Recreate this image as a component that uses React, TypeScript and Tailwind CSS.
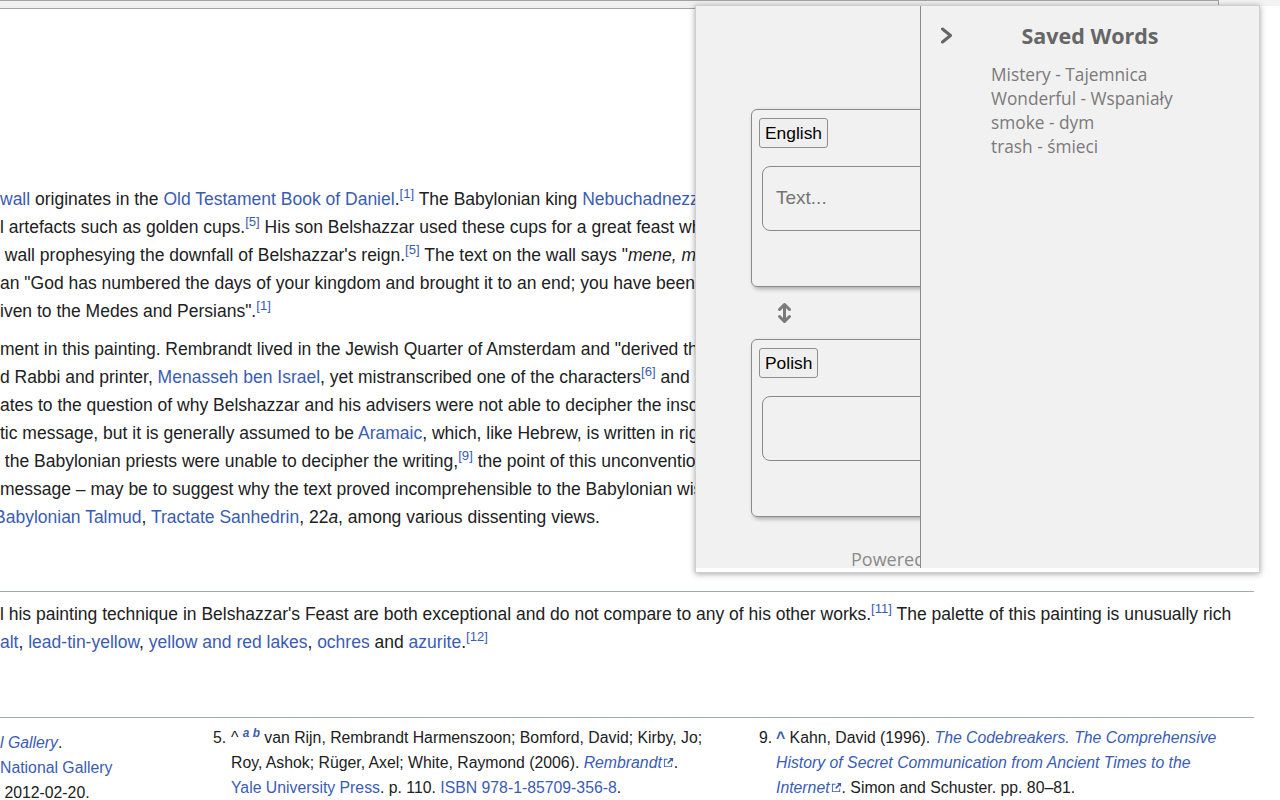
import React from "react";

// Wikipedia article (scrolled, clipped) with a translator popup on top

const A = ({ children, i }: { children: React.ReactNode; i?: boolean }) => (
  <a className={`text-[#3a5cb4] ${i ? "italic" : ""}`}>{children}</a>
);

const Ref = ({ n }: { n: number }) => <sup className="text-[#3a5cb4]">[{n}]</sup>;

const ExtIcon = () => (
  <svg width="11" height="11" viewBox="0 0 12 12" className="inline-block align-baseline ml-[1px]">
    <path fill="#3a5cb4" d="M1 2h4v1H2v7h7V7h1v4H1z" />
    <path fill="#3a5cb4" d="M6.5 1H11v4.5L9.3 3.8 5.6 7.5 4.5 6.4 8.2 2.7z" />
  </svg>
);

const SwapIcon = () => (
  <svg width="17" height="22" viewBox="0 0 17 22" fill="none" stroke="#7a7a7a" strokeWidth="3" strokeLinecap="round" strokeLinejoin="round">
    <path d="M8.5 3v16" />
    <path d="M3.5 7.5l5-5 5 5" />
    <path d="M3.5 14.5l5 5 5-5" />
  </svg>
);

const Chevron = () => (
  <svg width="13" height="17" viewBox="0 0 13 17" fill="none" stroke="#666" strokeWidth="3" strokeLinecap="round" strokeLinejoin="round">
    <path d="M2.5 2l8 6.5-8 6.5" />
  </svg>
);

function LangCard({ lang, placeholder }: { lang: string; placeholder?: string }) {
  return (
    <div className="w-[380px] h-[178px] rounded-[6px] border border-[#8a8a8a] shadow-[2px_2px_4px_rgba(0,0,0,0.3)] pl-[7px] pt-[8px]">
      <button className="h-[30px] px-[5px] rounded-[3px] border border-[#8f8f8f] bg-[#efefef] text-[17.4px] leading-[20px] text-black font-['Liberation_Sans',Arial,sans-serif]">
        {lang}
      </button>
      <div className="ml-[3px] mt-[18px] w-[360px] h-[65px] rounded-[8px] border border-[#8a8a8a] pl-[13px] flex items-center text-[19px] text-[#757575] font-['Liberation_Sans',Arial,sans-serif]">
        {placeholder}
      </div>
    </div>
  );
}

const savedWords = ["Mistery - Tajemnica", "Wonderful - Wspaniały", "smoke - dym", "trash - śmieci"];

export default function App() {
  return (
    <div className="relative w-[1280px] h-[800px] overflow-hidden bg-white text-[#202122] font-['Liberation_Sans',Arial,sans-serif]">
      {/* strip at the very top */}
      <div className="flex">
        <div className="w-[1219px] h-[9px] bg-[#f0f0f0] border-y border-r border-[#a3a3a3] rounded-br-[3px]" />
        <div className="flex-1 h-[6px] bg-[#f3f3f3]" />
      </div>

      <main className="text-[17.5px] leading-[28px] whitespace-nowrap">
        <div className="mt-[176px]">
          <div><A>wall</A> originates in the <A>Old Testament Book of Daniel</A>.<Ref n={1} /> The Babylonian king <A>Nebuchadnezzar</A> had plundered the Temple in Jerusalem</div>
          <div>l artefacts such as golden cups.<Ref n={5} /> His son Belshazzar used these cups for a great feast where a hand appeared</div>
          <div>&nbsp;wall prophesying the downfall of Belshazzar's reign.<Ref n={5} /> The text on the wall says "<i>mene, mene, tekel, upharsin</i>", which</div>
          <div>an "God has numbered the days of your kingdom and brought it to an end; you have been weighed</div>
          <div>iven to the Medes and Persians".<Ref n={1} /></div>
        </div>

        <div className="mt-[10px]">
          <div>ment in this painting. Rembrandt lived in the Jewish Quarter of Amsterdam and "derived the</div>
          <div>d Rabbi and printer, <A>Menasseh ben Israel</A>, yet mistranscribed one of the characters<Ref n={6} /> and</div>
          <div>ates to the question of why Belshazzar and his advisers were not able to decipher the inscription</div>
          <div>tic message, but it is generally assumed to be <A>Aramaic</A>, which, like Hebrew, is written in right</div>
          <div>&nbsp;the Babylonian priests were unable to decipher the writing,<Ref n={9} /> the point of this unconventional</div>
          <div>message – may be to suggest why the text proved incomprehensible to the Babylonian wise men</div>
          <div className="-ml-[6px]"><A>Babylonian Talmud</A>, <A>Tractate Sanhedrin</A>, 22<i>a</i>, among various dissenting views.</div>
        </div>

        <div className="mt-[60px] w-[1254px] border-t border-[#a2a9b1]" />

        <div className="mt-[8px]">
          <div>l his painting technique in Belshazzar's Feast are both exceptional and do not compare to any of his other works.<Ref n={11} /> The palette of this painting is unusually rich</div>
          <div><A>alt</A>, <A>lead-tin-yellow</A>, <A>yellow and red lakes</A>, <A>ochres</A> and <A>azurite</A>.<Ref n={12} /></div>
        </div>

        <div className="mt-[61px] w-[1254px] border-t border-[#a2a9b1]" />

        <div className="grid grid-cols-[213px_546px_1fr] mt-[7px] text-[15.8px] leading-[25px]">
          <div className="mt-[5px]">
            <div><A i>l Gallery</A>.</div>
            <div><A>National Gallery</A></div>
            <div>&nbsp;2012-02-20.</div>
          </div>
          <div className="flex">
            <span className="w-[18px] shrink-0">5.</span>
            <div>
              <div>^ <sup className="text-[#3a5cb4] italic font-bold">a b</sup> van Rijn, Rembrandt Harmenszoon; Bomford, David; Kirby, Jo;</div>
              <div>Roy, Ashok; Rüger, Axel; White, Raymond (2006). <A i>Rembrandt</A><ExtIcon />.</div>
              <div><A>Yale University Press</A>. p. 110. <A>ISBN 978-1-85709-356-8</A>.</div>
            </div>
          </div>
          <div className="flex">
            <span className="w-[17px] shrink-0">9.</span>
            <div>
              <div><A><b>^</b></A> Kahn, David (1996). <A i>The Codebreakers. The Comprehensive</A></div>
              <div><A i>History of Secret Communication from Ancient Times to the</A></div>
              <div><A i>Internet</A><ExtIcon />. Simon and Schuster. pp. 80–81.</div>
            </div>
          </div>
        </div>
      </main>

      {/* translator popup */}
      <div className="absolute left-[695px] top-[5px] w-[565px] h-[568px] bg-white border border-[#cfcfcf] pb-[4px] shadow-[0_1px_6px_rgba(0,0,0,0.35)]">
        <div className="flex h-full bg-[#f2f1f1] font-['Open_Sans',sans-serif]">
          <div className="w-[224px] shrink-0 overflow-hidden">
            <div className="w-[460px] pl-[55px] pt-[103px]">
              <LangCard lang="English" placeholder="Text..." />
              <div className="my-[15px] pl-[25px]">
                <SwapIcon />
              </div>
              <LangCard lang="Polish" />
              <div className="mt-[30px] pl-[100px] text-[18px] leading-[24px] text-[#8a8a8a] whitespace-nowrap">
                Powered by Google
              </div>
            </div>
          </div>

          <div className="relative flex-1 border-l border-[#8a8a8a] pt-[15px]">
            <div className="absolute left-[19px] top-[21px]">
              <Chevron />
            </div>
            <h2 className="text-center text-[21.5px] leading-[30px] font-bold text-[#666]">Saved Words</h2>
            <ul className="mt-[12px] pl-[70px] text-[17.3px] leading-[24px] text-[#7a7a7a]">
              {savedWords.map((w) => (
                <li key={w}>{w}</li>
              ))}
            </ul>
          </div>
        </div>
      </div>
    </div>
  );
}
